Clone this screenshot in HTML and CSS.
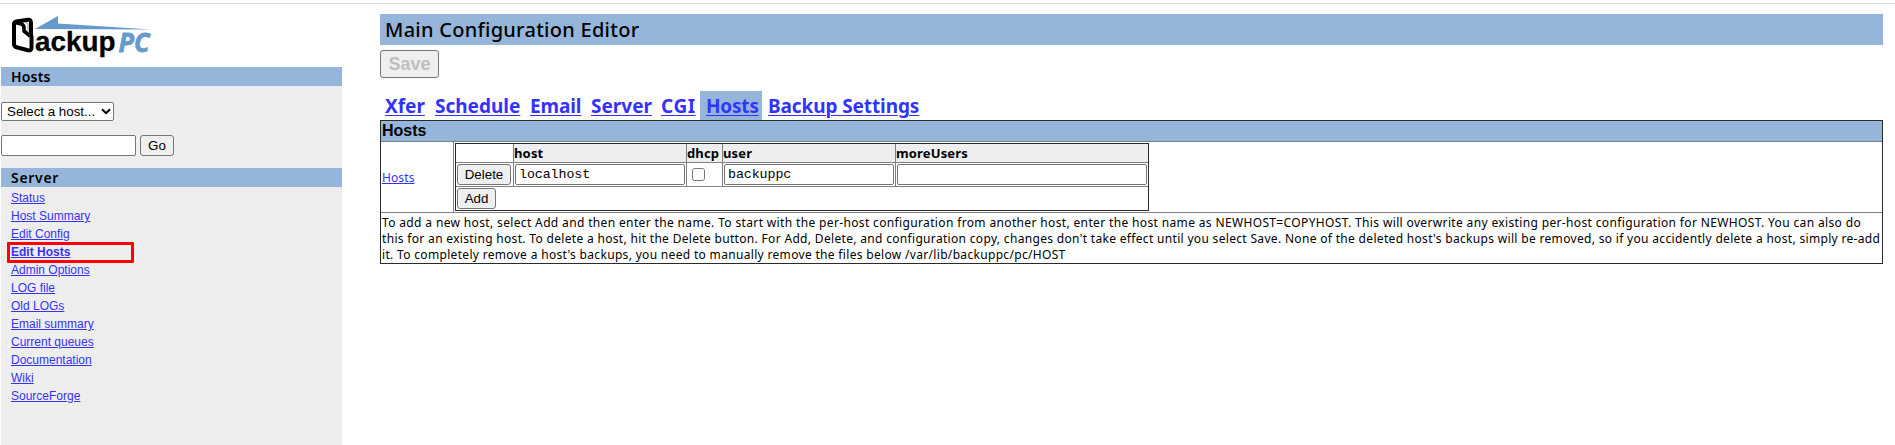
FILE: index.html
```html
<!DOCTYPE html>
<html lang="en">
<head>
<meta charset="utf-8">
<title>BackupPC: Main Configuration Editor</title>
<link rel="stylesheet" href="styles.css">
</head>
<body>
<div class="page">
  <aside class="sidebar">
    <svg class="logo" width="160" height="63" viewBox="0 4 160 63" role="img" aria-label="BackupPC">
      <path d="M35 29 58 16V23.5L151 29.5Z" fill="#6699cc"/>
      <path d="M14 24Q14 22 16 21.6L28 19.8Q31 19.5 31 23V34L31.5 37V48Q31.5 51 28 50.2L16.500 47.300Q14 46.500 14 44Z" fill="#fff" stroke="#000" stroke-width="4" stroke-linejoin="round"/>
      <path d="M15 22.500 21.500 24Q24 25 24 28V31L30 36" fill="none" stroke="#000" stroke-width="3.6" stroke-linejoin="round"/>
      <path d="M25 22.500 28 23.500V32" fill="none" stroke="#999" stroke-width="1"/>
      <text class="logo-name" x="35" y="50.700" textLength="80.500" lengthAdjust="spacingAndGlyphs">ackup</text>
      <text class="logo-pc" x="118.500" y="51.800" textLength="31" lengthAdjust="spacingAndGlyphs">PC</text>
    </svg>
    <div class="panel">
      <h2 class="side-title side-hosts">Hosts</h2>
      <div class="select">Select a host...<svg width="10" height="7" viewBox="0 0 10 7"><path d="M1 1.200 5 5.200 9 1.200" fill="none" stroke="#000" stroke-width="2"/></svg></div>
      <div class="search"><input class="search-box" type="text" aria-label="Host"><button class="btn go">Go</button></div>
      <h2 class="side-title side-server">Server</h2>
      <nav class="links">
        <a href="#">Status</a><a href="#">Host Summary</a><a href="#">Edit Config</a>
        <a href="#" class="current">Edit Hosts</a><a href="#">Admin Options</a><a href="#">LOG file</a>
        <a href="#">Old LOGs</a><a href="#">Email summary</a><a href="#">Current queues</a>
        <a href="#">Documentation</a><a href="#">Wiki</a><a href="#">SourceForge</a>
      </nav>
    </div>
  </aside>
  <main class="main">
    <h1 class="title">Main Configuration Editor</h1>
    <button class="btn save" disabled>Save</button>
    <nav class="tabs">
      <a href="#" class="t-xfer">Xfer</a><a href="#" class="t-schedule">Schedule</a><a href="#" class="t-email">Email</a><a href="#" class="t-server">Server</a><a href="#" class="t-cgi">CGI</a><a href="#" class="active">Hosts</a><a href="#" class="t-backup">Backup Settings</a>
    </nav>
    <section class="editor">
      <h3 class="editor-head">Hosts</h3>
      <div class="editor-row">
        <div class="label"><a href="#">Hosts</a></div>
        <div class="value">
          <div class="hosts">
            <div class="cell"></div><div class="cell th">host</div><div class="cell th">dhcp</div><div class="cell th">user</div><div class="cell th">moreUsers</div>
            <div class="cell"><button class="btn delete">Delete</button></div>
            <div class="cell"><input class="field" value="localhost" aria-label="host"></div>
            <div class="cell"><input class="check" type="checkbox" aria-label="dhcp"></div>
            <div class="cell"><input class="field" value="backuppc" aria-label="user"></div>
            <div class="cell"><input class="field" value="" aria-label="moreUsers"></div>
            <div class="cell wide"><button class="btn add">Add</button></div>
          </div>
        </div>
      </div>
      <p class="help"><span class="l1">To add a new host, select Add and then enter the name. To start with the per-host configuration from another host, enter the host name as NEWHOST=COPYHOST. This will overwrite any existing per-host configuration for NEWHOST. You can also do</span><br><span class="l2">this for an existing host. To delete a host, hit the Delete button. For Add, Delete, and configuration copy, changes don't take effect until you select Save. None of the deleted host's backups will be removed, so if you accidently delete a host, simply re-add</span><br><span class="l2">it. To completely remove a host's backups, you need to manually remove the files below /var/lib/backuppc/pc/HOST</span></p>
    </section>
  </main>
</div>
</body>
</html>
```

FILE: styles.css
```css
*, *::after { box-sizing: border-box; }
body { margin: 0; background: #fff; color: #000; font-family: "Noto Sans", sans-serif; overflow: hidden; }
h1, h2, h3, p { margin: 0; }
a { color: #3333ff; text-decoration: underline; }

.page { display: flex; height: 442px; border-top: 1px solid #dcdcdc; margin-top: 3px; }
.sidebar { width: 341px; margin-left: 1px; flex: none; display: flex; flex-direction: column; }
.logo { display: block; margin-left: -1px; }
.logo-name { font: 700 28.5px "Liberation Sans", sans-serif; fill: #000; stroke: #000; stroke-width: .3px; }
.logo-pc { font: italic 700 27px "Open Sans", sans-serif; fill: #6699cc; stroke: #6699cc; stroke-width: .8px; }

.panel { flex: 1; background: #eee; }
.side-title { height: 19px; background: #95b6da; font-size: 14px; font-weight: 600; line-height: 20px; padding-left: 10px; }
.side-hosts { letter-spacing: .2px; }
.side-server { letter-spacing: .7px; margin-top: 12px; }

.select { display: flex; align-items: center; gap: 6px; width: 113px; height: 19px; margin-top: 16px; padding-left: 5px; background: #fff; border: 1px solid #767676; border-radius: 2px; font: 13.333px "Liberation Sans", sans-serif; white-space: nowrap; }
.search { display: flex; gap: 4px; margin-top: 14px; }
.search-box { width: 135px; height: 21px; margin: 0; border: 1px solid #767676; border-radius: 2px; background: #fff; }
.btn { display: block; margin: 0; padding: 0; height: 21px; border: 1px solid #767676; border-radius: 3px; background: #efefef; color: #000; font: 13.333px "Liberation Sans", sans-serif; }
.go { width: 34px; }

.links { display: flex; flex-direction: column; align-items: flex-start; padding: 2px 0 0 10px; font: 12px/18px "Liberation Sans", sans-serif; }
.links a { height: 18px; text-underline-offset: 1px; }
.links .current { position: relative; font-weight: 700; }
.links .current::after { content: ""; position: absolute; left: -4px; top: -1px; width: 127px; height: 21px; border: 3px solid #f00; border-radius: 1px; }

.main { width: 1503px; margin-left: 38px; padding-top: 10px; }
.title { height: 31px; padding-left: 5px; background: #95b6da; font-size: 20px; font-weight: 500; line-height: 31px; letter-spacing: .27px; }
.btn.save { width: 59px; height: 28px; margin-top: 5px; font-size: 18px; font-weight: 700; color: #bfbfbf; }

.tabs { display: flex; height: 29px; margin-top: 13px; padding-left: 5px; font-size: 19px; font-weight: 700; line-height: 31px; white-space: nowrap; }
.tabs a { text-decoration-thickness: 1px; text-underline-offset: 2px; }
.t-xfer { width: 50px; }
.t-schedule { width: 95px; }
.t-email { width: 61px; letter-spacing: -.1px; }
.t-server { width: 70px; }
.t-cgi { width: 39px; letter-spacing: .6px; }
.tabs .active { width: 62px; padding-left: 6px; letter-spacing: -.2px; background: #95b6da; }
.t-backup { margin-left: 6px; letter-spacing: -.1px; }

.editor { border: 1px solid #2b2b2b; height: 144px; }
.editor-head { height: 21px; border-bottom: 1px solid #808080; background: #95b6da; font: 700 16px/19px "Liberation Sans", sans-serif; padding-left: 1px; }
.editor-row { display: flex; height: 71px; border-bottom: 1px solid #808080; }
.label { display: flex; align-items: center; width: 73px; padding: 1px 0 0 1px; border-right: 1px solid #808080; font-size: 12px; letter-spacing: .1px; }
.value { padding: 1px; }
.hosts { display: grid; grid-template-columns: 57px 172px 35px 172px 252px; grid-template-rows: 18px 23px 23px; gap: 1px; width: 694px; border: 1px solid #2b2b2b; background: #808080; }
.cell { background: #fff; padding: 1px; min-width: 0; }
.th { background: #eee; font-size: 13px; font-weight: 700; line-height: 18px; padding: 0; letter-spacing: .15px; }
.wide { grid-column: 1 / -1; }
.field { display: block; width: 100%; height: 21px; margin: 0; padding: 0 3px; border: 1px solid #767676; border-radius: 2px; background: #fff; font: 13.333px "Liberation Mono", monospace; letter-spacing: -.1px; }
.check { display: block; width: 13px; height: 13px; margin: 4px 0 0 4px; }
.delete { width: 54px; }
.add { width: 39px; }
.help { padding: 2px 0 0 1px; font-size: 12px; line-height: 16px; white-space: nowrap; }
.l1 { letter-spacing: .356px; }
.l2 { letter-spacing: .322px; }
```
